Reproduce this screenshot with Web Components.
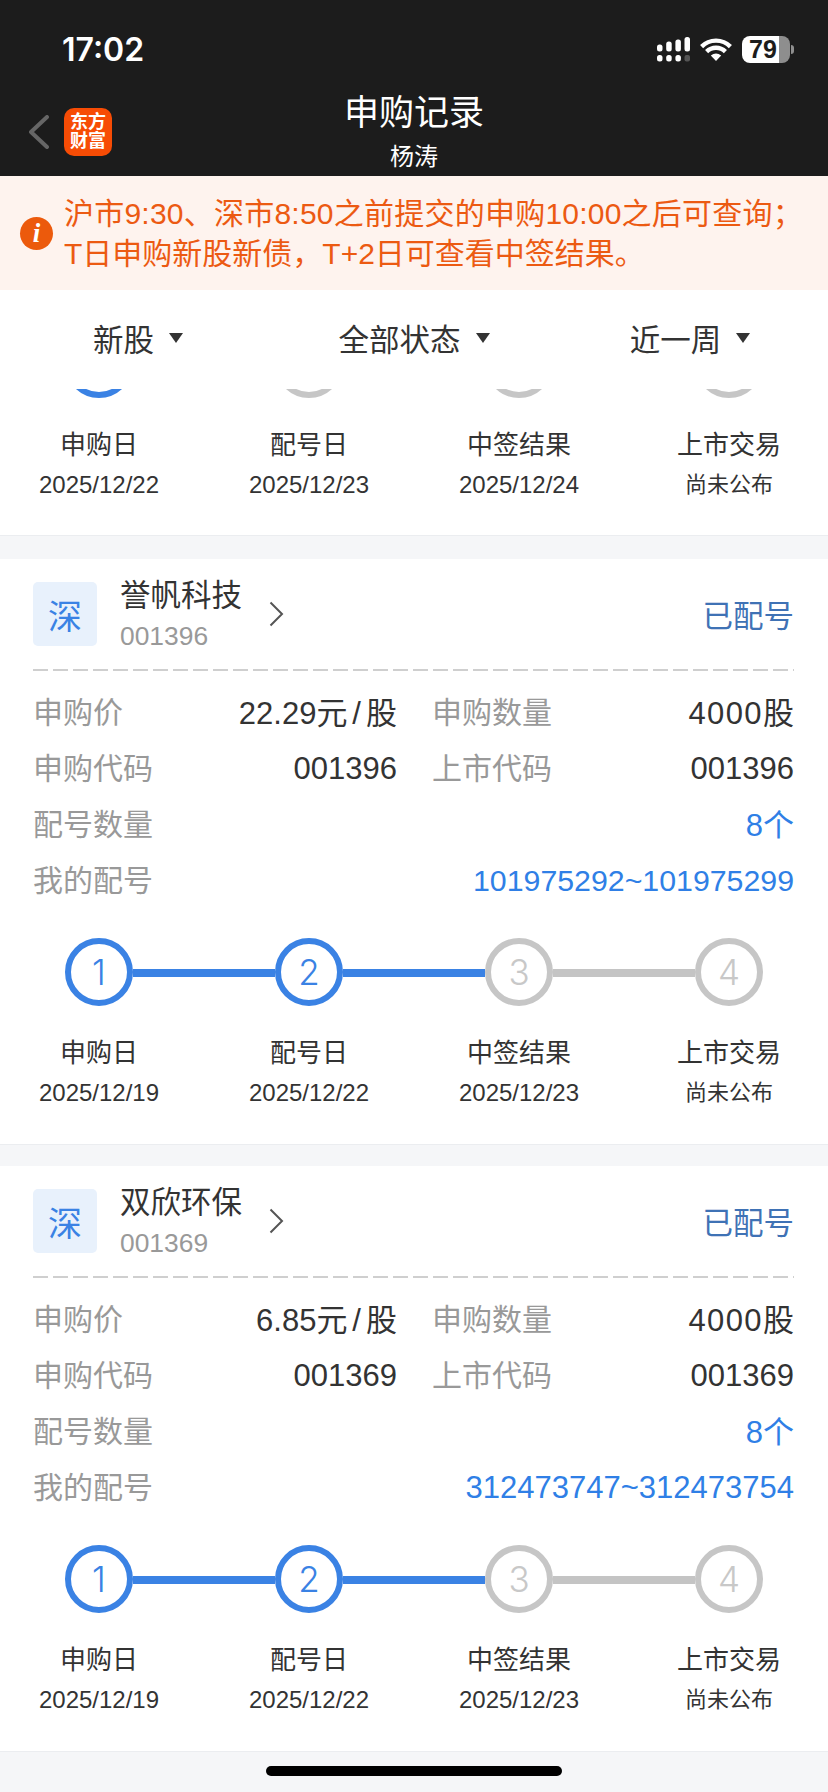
<!DOCTYPE html>
<html lang="zh-CN">
<head>
<meta charset="utf-8">
<title>申购记录</title>
<style>
  html, body {
    margin: 0;
    height: 1792px;
    overflow: hidden;
    background: #f5f6f8;
    font-family: "Liberation Sans", "Noto Sans CJK SC", sans-serif;
  }
  #app {
    display: flex;
    flex-direction: column;
    height: 1792px;
  }
  .unit {
    letter-spacing: 5px;
  }
  .spaced {
    letter-spacing: 1.4px;
  }
  .first-line {
    letter-spacing: 0.23px;
  }
</style>
</head>
<body>
<div id="app">
  <status-bar time="17:02" battery="79"></status-bar>
  <nav-bar>
    申购记录
    <span slot="sub">杨涛</span>
  </nav-bar>
  <notice-bar><span class="first-line">沪市9:30、深市8:50之前提交的申购10:00之后可查询；</span><br>T日申购新股新债，T+2日可查看中签结果。</notice-bar>
  <filter-bar>
    <filter-item>新股</filter-item>
    <filter-item>全部状态</filter-item>
    <filter-item>近一周</filter-item>
  </filter-bar>
  <record-list>
    <step-row class="cut">
      <step-item on right="blue"><span slot="label">申购日</span>2025/12/22</step-item>
      <step-item><span slot="label">配号日</span>2025/12/23</step-item>
      <step-item><span slot="label">中签结果</span>2025/12/24</step-item>
      <step-item small><span slot="label">上市交易</span>尚未公布</step-item>
    </step-row>

    <ipo-card name="誉帆科技" code="001396" market="深" status="已配号">
      <info-cell label="申购价">22.29<span class="unit">元/</span>股</info-cell>
      <info-cell label="申购数量"><span class="spaced">4000</span>股</info-cell>
      <info-cell digits label="申购代码">001396</info-cell>
      <info-cell digits label="上市代码">001396</info-cell>
      <info-cell wide link label="配号数量">8个</info-cell>
      <info-cell wide link digits long label="我的配号">101975292~101975299</info-cell>
      <step-row slot="steps">
        <step-item num="1" on right="blue"><span slot="label">申购日</span>2025/12/19</step-item>
        <step-item num="2" on left="blue" right="blue"><span slot="label">配号日</span>2025/12/22</step-item>
        <step-item num="3" left="blue" right="gray"><span slot="label">中签结果</span>2025/12/23</step-item>
        <step-item num="4" small left="gray"><span slot="label">上市交易</span>尚未公布</step-item>
      </step-row>
    </ipo-card>

    <ipo-card name="双欣环保" code="001369" market="深" status="已配号">
      <info-cell label="申购价">6.85<span class="unit">元/</span>股</info-cell>
      <info-cell label="申购数量"><span class="spaced">4000</span>股</info-cell>
      <info-cell digits label="申购代码">001369</info-cell>
      <info-cell digits label="上市代码">001369</info-cell>
      <info-cell wide link label="配号数量">8个</info-cell>
      <info-cell wide link digits label="我的配号">312473747~312473754</info-cell>
      <step-row slot="steps">
        <step-item num="1" on right="blue"><span slot="label">申购日</span>2025/12/19</step-item>
        <step-item num="2" on left="blue" right="blue"><span slot="label">配号日</span>2025/12/22</step-item>
        <step-item num="3" left="blue" right="gray"><span slot="label">中签结果</span>2025/12/23</step-item>
        <step-item num="4" small left="gray"><span slot="label">上市交易</span>尚未公布</step-item>
      </step-row>
    </ipo-card>
  </record-list>
  <home-bar></home-bar>
</div>

<script>
const statusTemplate = document.createElement("template");
statusTemplate.innerHTML = `
  <style>
    :host {
      display: flex;
      align-items: center;
      justify-content: space-between;
      box-sizing: border-box;
      height: 92px;
      padding: 6px 34px 0 62px;
      background: #1c1c1c;
      color: #fff;
    }
    .time {
      font-family: Inter, "Liberation Sans", sans-serif;
      font-size: 32px;
      font-weight: 600;
    }
    .icons {
      display: flex;
      align-items: center;
      gap: 10px;
    }
    svg {
      display: block;
    }
    .battery {
      display: flex;
      align-items: center;
      gap: 1px;
    }
    .level {
      display: flex;
      align-items: center;
      justify-content: center;
      box-sizing: border-box;
      width: 48px;
      height: 27px;
      padding-right: 6px;
      border-radius: 8px;
      background: linear-gradient(90deg, #fff 37px, #8e8e8e 37px);
      color: #1c1c1c;
      font-size: 25px;
      font-weight: 700;
    }
    .nub {
      width: 3px;
      height: 9px;
      border-radius: 0 3px 3px 0;
      background: #8e8e8e;
    }
  </style>
  <span class="time"></span>
  <div class="icons">
    <svg width="33" height="25" viewBox="0 0 33 25" fill="#fff">
      <rect x="0" y="7.5" width="5.5" height="7" rx="2.5"></rect>
      <rect x="9.2" y="4.5" width="5.5" height="10" rx="2.5"></rect>
      <rect x="18.4" y="2.5" width="5.5" height="12" rx="2.5"></rect>
      <rect x="27.5" y="0" width="5.5" height="14.5" rx="2.5"></rect>
      <rect x="0" y="18" width="5.5" height="6.5" rx="2.5"></rect>
      <rect x="9.2" y="18" width="5.5" height="6.5" rx="2.5"></rect>
      <rect x="18.4" y="18" width="5.5" height="6.5" rx="2.5"></rect>
      <rect x="27.5" y="18" width="5.5" height="6.5" rx="2" fill="#555"></rect>
    </svg>
    <svg width="32" height="23" viewBox="0 0 32 23" fill="none" stroke="#fff" stroke-width="4.4">
      <path d="M1.6 8.6A20.4 20.4 0 0 1 30.4 8.6"></path>
      <path d="M6.6 13.6A13.3 13.3 0 0 1 25.4 13.6"></path>
      <path d="M16 23L10.8 17.6Q16 13.2 21.2 17.6Z" fill="#fff" stroke="none"></path>
    </svg>
    <div class="battery">
      <div class="level"></div>
      <div class="nub"></div>
    </div>
  </div>
`;

class StatusBar extends HTMLElement {
  constructor() {
    super();
    this.attachShadow({ mode: "open" });
    this.shadowRoot.appendChild(statusTemplate.content.cloneNode(true));
    this.shadowRoot.querySelector(".time").textContent = this.getAttribute("time");
    this.shadowRoot.querySelector(".level").textContent = this.getAttribute("battery");
  }
}

const navTemplate = document.createElement("template");
navTemplate.innerHTML = `
  <style>
    :host {
      display: grid;
      grid-template-columns: 1fr auto 1fr;
      box-sizing: border-box;
      height: 84px;
      background: #1c1c1c;
      color: #fff;
    }
    .left {
      display: flex;
      align-items: center;
      gap: 15px;
      height: 80px;
      padding-left: 29px;
    }
    .logo {
      display: flex;
      align-items: center;
      justify-content: center;
      width: 48px;
      height: 48px;
      border-radius: 10px;
      background: #f74c05;
      font-size: 18px;
      font-weight: 700;
      line-height: 19px;
      text-align: center;
    }
    .title {
      font-size: 35px;
      line-height: 42px;
      text-align: center;
    }
    ::slotted([slot="sub"]) {
      display: block;
      font-size: 24px;
      line-height: 46px;
    }
  </style>
  <div class="left">
    <svg width="20" height="34" viewBox="0 0 20 34" fill="none" stroke="#666" stroke-width="4" stroke-linecap="round" stroke-linejoin="round">
      <path d="M18 2L2 17L18 32"></path>
    </svg>
    <div class="logo">东方<br>财富</div>
  </div>
  <div class="title">
    <slot></slot>
    <slot name="sub"></slot>
  </div>
`;

class NavBar extends HTMLElement {
  constructor() {
    super();
    this.attachShadow({ mode: "open" });
    this.shadowRoot.appendChild(navTemplate.content.cloneNode(true));
  }
}

const noticeTemplate = document.createElement("template");
noticeTemplate.innerHTML = `
  <style>
    :host {
      display: flex;
      align-items: center;
      gap: 11px;
      box-sizing: border-box;
      height: 114px;
      padding: 2px 0 0 20px;
      background: #fef3ee;
      color: #ec5a12;
      font-size: 30px;
      line-height: 40px;
      white-space: nowrap;
    }
    .icon {
      display: flex;
      align-items: center;
      justify-content: center;
      flex: none;
      width: 33px;
      height: 33px;
      margin-top: -2px;
      border-radius: 50%;
      background: #ec5a0c;
      color: #fff;
      font-family: "Liberation Serif", serif;
      font-size: 27px;
      font-style: italic;
      font-weight: 700;
      line-height: 33px;
    }
  </style>
  <span class="icon">i</span>
  <div><slot></slot></div>
`;

class NoticeBar extends HTMLElement {
  constructor() {
    super();
    this.attachShadow({ mode: "open" });
    this.shadowRoot.appendChild(noticeTemplate.content.cloneNode(true));
  }
}

const filterBarTemplate = document.createElement("template");
filterBarTemplate.innerHTML = `
  <style>
    :host {
      display: grid;
      grid-template-columns: repeat(3, 1fr);
      box-sizing: border-box;
      height: 99px;
      padding-bottom: 3px;
      background: #fff;
    }
  </style>
  <slot></slot>
`;

class FilterBar extends HTMLElement {
  constructor() {
    super();
    this.attachShadow({ mode: "open" });
    this.shadowRoot.appendChild(filterBarTemplate.content.cloneNode(true));
  }
}

const filterItemTemplate = document.createElement("template");
filterItemTemplate.innerHTML = `
  <style>
    :host {
      display: flex;
      align-items: center;
      justify-content: center;
      gap: 15px;
      color: #333;
      font-size: 30.5px;
    }
    .arrow {
      width: 0;
      height: 0;
      border-style: solid;
      border-width: 10px 7.5px 0;
      border-color: #333 transparent transparent;
    }
  </style>
  <slot></slot>
  <span class="arrow"></span>
`;

class FilterItem extends HTMLElement {
  constructor() {
    super();
    this.attachShadow({ mode: "open" });
    this.shadowRoot.appendChild(filterItemTemplate.content.cloneNode(true));
  }
}

const listTemplate = document.createElement("template");
listTemplate.innerHTML = `
  <style>
    :host {
      display: flex;
      flex-direction: column;
      flex: 1;
      min-height: 0;
      overflow: hidden;
      gap: 21px;
    }
    ::slotted(.cut) {
      margin-top: -59px;
      padding-bottom: 35px;
      margin-bottom: 2px;
      background: #fff;
      border-bottom: 1px solid #ebedf0;
    }
  </style>
  <slot></slot>
`;

class RecordList extends HTMLElement {
  constructor() {
    super();
    this.attachShadow({ mode: "open" });
    this.shadowRoot.appendChild(listTemplate.content.cloneNode(true));
  }
}

const cardTemplate = document.createElement("template");
cardTemplate.innerHTML = `
  <style>
    :host {
      display: block;
      flex: none;
      box-sizing: border-box;
      padding-bottom: 36px;
      border-bottom: 1px solid #ebedf0;
      background: #fff;
    }
    .head {
      display: flex;
      align-items: center;
      margin: 0 34px 0 33px;
      padding: 18px 0 20px;
      background: repeating-linear-gradient(90deg, #cfcfcf 0 15px, transparent 15px 20px) left bottom / 100% 2px no-repeat;
    }
    .market {
      display: flex;
      align-items: center;
      justify-content: center;
      flex: none;
      width: 64px;
      height: 64px;
      border-radius: 5px;
      background: #e8f1fc;
      color: #3a82e4;
      font-size: 34px;
    }
    .names {
      margin-left: 23px;
    }
    .name {
      color: #333;
      font-size: 30.5px;
      line-height: 36px;
    }
    .code {
      margin-top: 8px;
      color: #999;
      font-size: 26.4px;
      line-height: 30px;
    }
    svg {
      display: block;
      flex: none;
      margin-left: 27px;
    }
    .status {
      margin-left: auto;
      color: #3f72b5;
      font-size: 30.5px;
    }
    .grid {
      display: grid;
      grid-template-columns: 364px 1fr;
      column-gap: 35px;
      grid-auto-rows: 56px;
      margin: 11px 34px 32px 33px;
    }
  </style>
  <div class="head">
    <div class="market"></div>
    <div class="names">
      <div class="name"></div>
      <div class="code"></div>
    </div>
    <svg width="15" height="26" viewBox="0 0 15 26" fill="none" stroke="#555" stroke-width="2">
      <path d="M1.5 1.5L13 13L1.5 24.5"></path>
    </svg>
    <div class="status"></div>
  </div>
  <div class="grid"><slot></slot></div>
  <slot name="steps"></slot>
`;

class IpoCard extends HTMLElement {
  constructor() {
    super();
    this.attachShadow({ mode: "open" });
    this.shadowRoot.appendChild(cardTemplate.content.cloneNode(true));
    this.shadowRoot.querySelector(".market").textContent = this.getAttribute("market");
    this.shadowRoot.querySelector(".name").textContent = this.getAttribute("name");
    this.shadowRoot.querySelector(".code").textContent = this.getAttribute("code");
    this.shadowRoot.querySelector(".status").textContent = this.getAttribute("status");
  }
}

const cellTemplate = document.createElement("template");
cellTemplate.innerHTML = `
  <style>
    :host {
      display: flex;
      align-items: center;
      justify-content: space-between;
      color: #333;
      font-size: 30px;
      white-space: nowrap;
    }
    :host([wide]) {
      grid-column: 1 / -1;
    }
    :host([link]) {
      color: #2f7fe6;
    }
    .label {
      color: #999;
    }
    .value {
      font-size: 31px;
    }
    :host([digits]) .value {
      padding-top: 6px;
    }
    :host([long]) .value {
      font-size: 30.3px;
    }
  </style>
  <span class="label"></span>
  <span class="value"><slot></slot></span>
`;

class InfoCell extends HTMLElement {
  constructor() {
    super();
    this.attachShadow({ mode: "open" });
    this.shadowRoot.appendChild(cellTemplate.content.cloneNode(true));
    this.shadowRoot.querySelector(".label").textContent = this.getAttribute("label");
  }
}

const stepRowTemplate = document.createElement("template");
stepRowTemplate.innerHTML = `
  <style>
    :host {
      display: grid;
      flex: none;
      grid-template-columns: repeat(4, 210px);
      margin-inline: -6px;
    }
  </style>
  <slot></slot>
`;

class StepRow extends HTMLElement {
  constructor() {
    super();
    this.attachShadow({ mode: "open" });
    this.shadowRoot.appendChild(stepRowTemplate.content.cloneNode(true));
  }
}

const stepTemplate = document.createElement("template");
stepTemplate.innerHTML = `
  <style>
    :host {
      display: block;
      color: #333;
      font-size: 24px;
      line-height: 30px;
      text-align: center;
      white-space: nowrap;
      --step-color: #c6c6c6;
      --num-color: #c8c8c8;
    }
    :host([on]) {
      --step-color: #3a82e4;
      --num-color: #3a82e4;
    }
    :host([small]) .date {
      font-size: 22px;
    }
    .track {
      display: flex;
      align-items: center;
    }
    .line {
      flex: 1;
      height: 8px;
      margin-top: 2px;
    }
    .blue {
      background: #3a82e4;
    }
    .gray {
      background: #c4c4c4;
    }
    .circle {
      display: flex;
      align-items: center;
      justify-content: center;
      flex: none;
      box-sizing: border-box;
      width: 68px;
      height: 68px;
      border: 6px solid var(--step-color);
      border-radius: 50%;
      color: var(--num-color);
      font-family: Inter, "Liberation Sans", sans-serif;
      font-size: 35px;
      font-weight: 300;
    }
    .label {
      margin-top: 29px;
      font-size: 26px;
      line-height: 36px;
    }
    .date {
      margin-top: 7px;
    }
  </style>
  <div class="track">
    <span class="line left"></span>
    <span class="circle"></span>
    <span class="line right"></span>
  </div>
  <div class="label"><slot name="label"></slot></div>
  <div class="date"><slot></slot></div>
`;

class StepItem extends HTMLElement {
  constructor() {
    super();
    this.attachShadow({ mode: "open" });
    this.shadowRoot.appendChild(stepTemplate.content.cloneNode(true));
    this.shadowRoot.querySelector(".circle").textContent = this.getAttribute("num");
    const left = this.getAttribute("left");
    const right = this.getAttribute("right");
    if (left) this.shadowRoot.querySelector(".left").classList.add(left);
    if (right) this.shadowRoot.querySelector(".right").classList.add(right);
  }
}

const homeTemplate = document.createElement("template");
homeTemplate.innerHTML = `
  <style>
    :host {
      display: flex;
      justify-content: center;
      flex: none;
      box-sizing: border-box;
      height: 40px;
      padding-top: 14px;
      background: #f5f6f8;
    }
    .bar {
      width: 296px;
      height: 10px;
      border-radius: 5px;
      background: #000;
    }
  </style>
  <div class="bar"></div>
`;

class HomeBar extends HTMLElement {
  constructor() {
    super();
    this.attachShadow({ mode: "open" });
    this.shadowRoot.appendChild(homeTemplate.content.cloneNode(true));
  }
}

window.customElements.define("status-bar", StatusBar);
window.customElements.define("nav-bar", NavBar);
window.customElements.define("notice-bar", NoticeBar);
window.customElements.define("filter-bar", FilterBar);
window.customElements.define("filter-item", FilterItem);
window.customElements.define("record-list", RecordList);
window.customElements.define("ipo-card", IpoCard);
window.customElements.define("info-cell", InfoCell);
window.customElements.define("step-row", StepRow);
window.customElements.define("step-item", StepItem);
window.customElements.define("home-bar", HomeBar);
</script>
</body>
</html>
